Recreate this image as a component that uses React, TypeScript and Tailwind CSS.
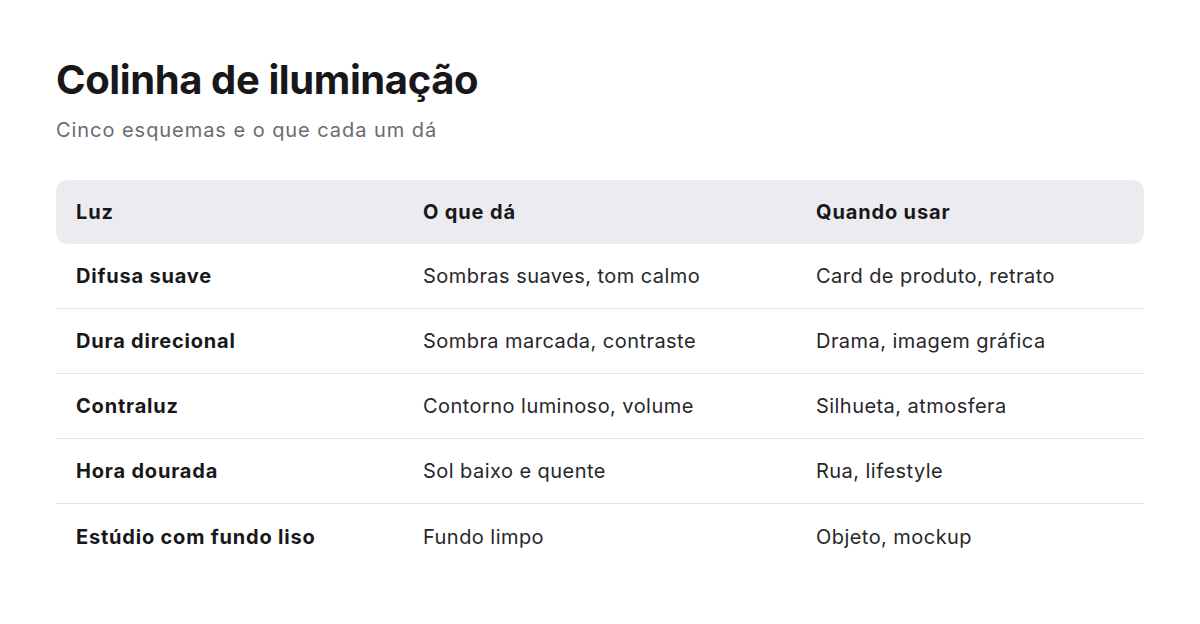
import React from "react";

const rows = [
  ["Difusa suave", "Sombras suaves, tom calmo", "Card de produto, retrato"],
  ["Dura direcional", "Sombra marcada, contraste", "Drama, imagem gráfica"],
  ["Contraluz", "Contorno luminoso, volume", "Silhueta, atmosfera"],
  ["Hora dourada", "Sol baixo e quente", "Rua, lifestyle"],
  ["Estúdio com fundo liso", "Fundo limpo", "Objeto, mockup"],
];

export default function App() {
  return (
    <div
      className="w-[1200px] h-[624px] bg-white px-14 pt-[56px] text-[#18181b]"
      style={{ fontFamily: "Inter, 'Noto Sans', sans-serif" }}
    >
      <h1 className="text-[40px] leading-[48px] font-bold tracking-[-0.01em]">Colinha de iluminação</h1>
      <p className="mt-[12px] text-[20px] leading-[28px] tracking-[0.95px] text-[#6b6b70]">Cinco esquemas e o que cada um dá</p>
      <div className="mt-[36px] w-[1088px]">
        <div className="grid grid-cols-[347px_393px_348px] bg-[#ececf0] rounded-xl h-[64px] items-center text-[20px] tracking-[0.85px] font-bold">
          <div className="pl-5">Luz</div>
          <div className="pl-5">O que dá</div>
          <div className="pl-5">Quando usar</div>
        </div>
        {rows.map((r, i) => (
          <div
            key={i}
            className={`grid grid-cols-[347px_393px_348px] h-[65px] items-center text-[20px] ${
              i < rows.length - 1 ? "border-b border-[#e4e4e7]" : ""
            }`}
          >
            <div className="pl-5 font-bold tracking-[0.8px]">{r[0]}</div>
            <div className="pl-5 text-[#27272a] tracking-[0.45px]">{r[1]}</div>
            <div className="pl-5 text-[#27272a] tracking-[0.45px]">{r[2]}</div>
          </div>
        ))}
      </div>
    </div>
  );
}
